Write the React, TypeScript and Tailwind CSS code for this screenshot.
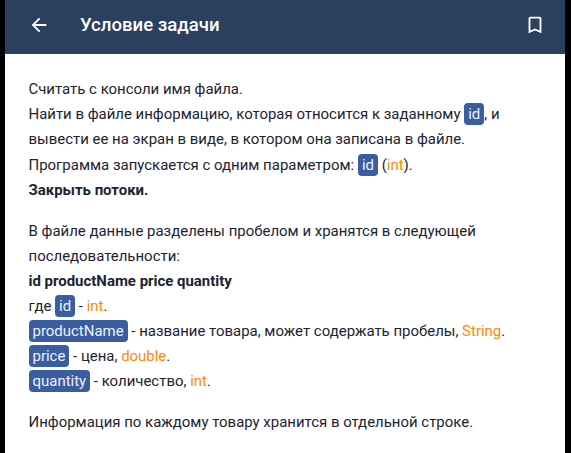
const Tag = ({ children }: { children: string }) => (
  <span className="rounded-[4px] bg-[#3a5da0] px-1 py-[2px] text-[#eef1f8]">{children}</span>
);

const Type = ({ children }: { children: string }) => (
  <span className="text-[#f98c0a]">{children}</span>
);

const BackIcon = () => (
  <svg width="22" height="22" viewBox="0 0 24 24" fill="currentColor">
    <path d="M20 11H7.83l5.59-5.59L12 4l-8 8 8 8 1.41-1.41L7.83 13H20v-2z" />
  </svg>
);

const BookmarkIcon = () => (
  <svg width="22" height="22" viewBox="0 0 24 24" fill="currentColor">
    <path d="M17 3H7c-1.1 0-2 .9-2 2v16l7-3 7 3V5c0-1.1-.9-2-2-2zm0 15l-5-2.18L7 18V5h10v13z" />
  </svg>
);

const App = () => {
  return (
    <div className="h-[453px] w-[571px] overflow-hidden bg-black pl-[5px] pr-[6px] font-['Roboto',sans-serif]">
      <div className="h-full bg-white">
        <header className="flex h-[54px] items-center bg-[#2b3f5f] pb-[5px] pl-[22.5px] pr-[19px] text-white">
          <BackIcon />
          <h1 className="ml-[30.5px] mt-[2px] flex-1 text-[18.6px] font-medium">Условие задачи</h1>
          <BookmarkIcon />
        </header>

        <div className="pl-[23.5px] pr-6 pt-[23px] text-[14.96px] text-[#1d2330]">
          <div className="leading-[25.2px]">
            <p>Считать с консоли имя файла.</p>
            <p>
              Найти в файле информацию, которая относится к заданному <Tag>id</Tag>, и
            </p>
            <p>вывести ее на экран в виде, в котором она записана в файле.</p>
            <p>
              Программа запускается с одним параметром: <Tag>id</Tag> (<Type>int</Type>).
            </p>
            <p className="font-bold">Закрыть потоки.</p>
          </div>

          <div className="mt-[16px] leading-[25px]">
            <p>В файле данные разделены пробелом и хранятся в следующей</p>
            <p>последовательности:</p>
            <p className="font-bold">id productName price quantity</p>
            <p>
              где <Tag>id</Tag> - <Type>int</Type>.
            </p>
            <p>
              <Tag>productName</Tag> - название товара, может содержать пробелы, <Type>String</Type>.
            </p>
            <p>
              <Tag>price</Tag> - цена, <Type>double</Type>.
            </p>
            <p>
              <Tag>quantity</Tag> - количество, <Type>int</Type>.
            </p>
          </div>

          <p className="mt-[16px] leading-[25px]">Информация по каждому товару хранится в отдельной строке.</p>
        </div>
      </div>
    </div>
  );
};

export default App;
